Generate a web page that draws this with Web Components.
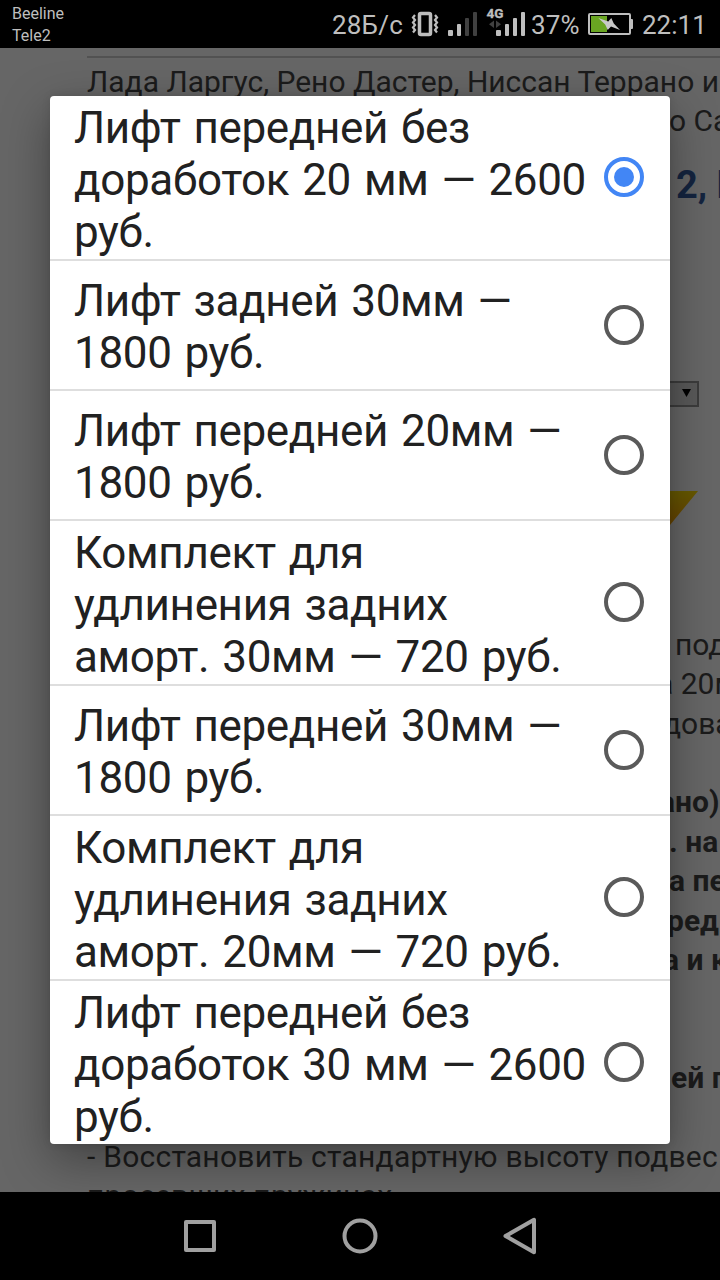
<!DOCTYPE html>
<html lang="ru">
<head>
<meta charset="utf-8">
<title>Лифт комплекты</title>
<style>
  body {
    margin: 0;
    background: #000;
    font-family: Roboto, "Noto Sans", sans-serif;
  }
</style>
</head>
<body>
<phone-screen>
  <status-bar slot="status"></status-bar>
  <shop-page slot="page"></shop-page>
  <select-dialog slot="dialog">
    <select-option checked>Лифт передней без доработок 20 мм — 2600 руб.</select-option>
    <select-option>Лифт задней 30мм — 1800 руб.</select-option>
    <select-option>Лифт передней 20мм — 1800 руб.</select-option>
    <select-option>Комплект для удлинения задних аморт. 30мм — 720 руб.</select-option>
    <select-option>Лифт передней 30мм — 1800 руб.</select-option>
    <select-option>Комплект для удлинения задних аморт. 20мм — 720 руб.</select-option>
    <select-option>Лифт передней без доработок 30 мм — 2600 руб.</select-option>
  </select-dialog>
  <nav-bar slot="nav"></nav-bar>
</phone-screen>

<script>
class BaseElement extends HTMLElement {
  constructor() {
    super()
    this.attachShadow({ mode: 'open' })
  }

  connectedCallback() {
    this.shadowRoot.innerHTML = this.render()
  }
}

class PhoneScreen extends BaseElement {
  render() {
    return `
      <style>
        :host {
          display: grid;
          grid-template-rows: 48px 1144px 88px;
          width: 720px;
          height: 1280px;
          overflow: hidden;
        }
        main {
          position: relative;
          overflow: hidden;
          background: #666;
        }
        /* modal lies over the page */
        .modal {
          position: absolute;
          inset: 0;
          display: grid;
          place-items: center;
        }
      </style>
      <slot name="status"></slot>
      <main>
        <slot name="page"></slot>
        <div class="modal"><slot name="dialog"></slot></div>
      </main>
      <slot name="nav"></slot>
    `
  }
}

class StatusBar extends BaseElement {
  render() {
    return `
      <style>
        :host {
          display: flex;
          justify-content: space-between;
          background: #000;
          color: #bebebe;
          padding: 0 14px 0 12px;
          box-sizing: border-box;
          height: 48px;
          overflow: hidden;
        }
        .carriers {
          font-size: 16px;
          line-height: 22px;
          padding-top: 3px;
        }
        .right {
          display: flex;
          font-size: 26px;
          line-height: 48px;
          padding-top: 1px;
          white-space: nowrap;
        }
        svg { display: block; margin-top: -1px; flex: none; }
        .speed { width: 79px; letter-spacing: .2px; }
        .level { width: 53px; letter-spacing: .2px; }
        .clock { width: 64px; }
      </style>
      <div class="carriers">
        <div>Beeline</div>
        <div>Tele2</div>
      </div>
      <div class="right">
        <span class="speed">28Б/с</span>
        <svg width="120" height="48" viewBox="411 0 120 48">
          <rect x="419.5" y="13.5" width="11" height="21" rx="1.5" fill="none" stroke="#bebebe" stroke-width="3.500"/>
          <path d="M415 15l-2 2.500 2 2.500-2 2.500 2 2.500-2 2.500 2 2.500-2 2.500M435 15l2 2.500-2 2.500 2 2.500-2 2.500 2 2.500-2 2.500 2 2.500" fill="none" stroke="#bebebe" stroke-width="2.200"/>
          <g fill="#bebebe">
            <rect x="448" y="30" width="5" height="6" rx="1"/>
            <rect x="457" y="24" width="4" height="12" rx="1"/>
          </g>
          <g fill="#404040">
            <rect x="465" y="18" width="4" height="18" rx="1"/>
            <rect x="473" y="12" width="4" height="24" rx="1"/>
            <path d="M494 20.500v7.500l-5-3.750zM496 20.500v7.500l5-3.750z"/>
          </g>
          <text x="486.500" y="18" font-size="13.500" font-weight="700" fill="#bebebe" stroke="#bebebe" stroke-width=".3">4G</text>
          <g fill="#bebebe">
            <rect x="496" y="30" width="5" height="6" rx="1"/>
            <rect x="505" y="24" width="4" height="12" rx="1"/>
            <rect x="513" y="18" width="4" height="18" rx="1"/>
            <rect x="521" y="12" width="4" height="24" rx="1"/>
          </g>
        </svg>
        <span class="level">37%</span>
        <svg width="58" height="48" viewBox="584 0 58 48">
          <rect x="589" y="14" width="41" height="20" rx="1" fill="none" stroke="#bebebe" stroke-width="2"/>
          <rect x="630" y="19" width="3" height="10" rx="1" fill="#bebebe"/>
          <rect x="591" y="16" width="16" height="16" fill="#69a522"/>
          <path d="M598.300 18l10 3.500 3-3.500 2.500 5.500 6.200 6.500-9-3.500-3.300 3.500-2.500-5.500z" fill="#c8c8c8"/>
        </svg>
        <span class="clock">22:11</span>
      </div>
    `
  }
}

class ShopPage extends BaseElement {
  render() {
    // fragments showing to the right of the dialog: [offset, text, bold]
    const lines = [
      [675, 'под'],
      [657, 'а 20м'],
      [663, 'дова'],
      [0, ''],
      [659, 'ано)', 1],
      [669, '. на', 1],
      [669, 'а пе', 1],
      [667, 'ред', 1],
      [663, 'а и к', 1],
      [0, ''],
      [0, ''],
      [654, 'ней п', 1],
      [0, '']
    ]

    return `
      <style>
        :host {
          display: flex;
          flex-direction: column;
          height: 1144px;
          overflow: hidden;
          white-space: nowrap;
          color: #1b1b1b;
          font-size: 30px;
          line-height: 39.4px;
        }
        p { margin: 0; height: 39.4px; flex: none; }
        b { font-weight: 700; }
        hr {
          margin: 8px 0 3.5px 87px;
          border: 0;
          height: 2px;
          background: #525252;
          flex: none;
        }
        h2 {
          margin: 20px 0 0 676px;
          font-size: 38px;
          line-height: 50px;
          color: #14243f;
          flex: none;
        }
        .full { padding-left: 87px; }
        .wide { letter-spacing: .24px; }
        .combo {
          box-sizing: border-box;
          width: 59px;
          height: 26px;
          margin: 170.5px 0 0 640px;
          border: 2px solid #3c3c3c;
          background: #595959;
          display: flex;
          align-items: center;
          justify-content: flex-end;
          padding-right: 6px;
          flex: none;
        }
        .combo svg { margin-top: -2px; }
        .arrow { display: block; margin: 84px 0 100px 630px; flex: none; }
      </style>
      <hr>
      <p class="full">Лада Ларгус, Рено Дастер, Ниссан Террано и</p>
      <p style="padding-left: 669px">о Са</p>
      <h2>2, Р</h2>
      <div class="combo">
        <svg width="9" height="8"><path d="M0 0h9l-4.500 8z" fill="#000"/></svg>
      </div>
      <svg class="arrow" width="68" height="34">
        <defs>
          <linearGradient id="gold" x1="0" y1="0" x2="0" y2="1">
            <stop offset="0" stop-color="#665900"/>
            <stop offset="1" stop-color="#664200"/>
          </linearGradient>
        </defs>
        <path d="M0 0h68l-28 34h-40z" fill="url(#gold)"/>
      </svg>
      ${lines.map(([x, text, bold]) => `<p style="padding-left: ${x}px">${bold ? `<b>${text}</b>` : text}</p>`).join('')}
      <p class="full wide">- Восстановить стандартную высоту подвес</p>
      <p class="full wide">просевших пружинах.</p>
    `
  }
}

class SelectDialog extends BaseElement {
  render() {
    return `
      <style>
        :host {
          display: block;
          width: 620px;
          background: #fff;
          border-radius: 4px;
          overflow: hidden;
          box-shadow: 0 16px 48px rgba(0, 0, 0, .36), 0 0 8px rgba(0, 0, 0, .1);
        }
        ::slotted(select-option:not(:last-child)) {
          border-bottom: 2px solid #dedede;
        }
      </style>
      <slot></slot>
    `
  }
}

class SelectOption extends BaseElement {
  render() {
    const checked = this.hasAttribute('checked')
    const color = checked ? '#4286f5' : '#5a5a5a'
    return `
      <style>
        :host {
          display: flex;
          align-items: center;
          min-height: 128px;
          padding: 0 26px 0 24px;
          color: #212121;
        }
        .label {
          flex: 1;
          padding: 5.6px 0 1.4px;
          font-size: 44px;
          line-height: 52px;
          letter-spacing: -.35px;
          word-spacing: 2.4px;
          margin-right: 12px;
        }
        svg { display: block; flex: none; margin-bottom: .6px; }
      </style>
      <div class="label"><slot></slot></div>
      <svg width="40" height="40" viewBox="0 0 40 40">
        <circle cx="20" cy="20" r="18" fill="none" stroke="${color}" stroke-width="4"/>
        ${checked ? `<circle cx="20" cy="20" r="10" fill="${color}"/>` : ''}
      </svg>
    `
  }
}

class NavBar extends BaseElement {
  render() {
    return `
      <style>
        :host {
          display: flex;
          align-items: center;
          justify-content: center;
          gap: 120px;
          height: 88px;
          background: #000;
        }
        svg { fill: none; stroke: #a0a0a0; stroke-width: 4; stroke-linejoin: round; }
      </style>
      <svg width="40" height="40"><rect x="6" y="6" width="28" height="28"/></svg>
      <svg width="40" height="40"><circle cx="20" cy="20" r="15.500"/></svg>
      <svg width="40" height="40"><path d="M34 3.800v32.400L5.500 20z"/></svg>
    `
  }
}

customElements.define('phone-screen', PhoneScreen)
customElements.define('status-bar', StatusBar)
customElements.define('shop-page', ShopPage)
customElements.define('select-dialog', SelectDialog)
customElements.define('select-option', SelectOption)
customElements.define('nav-bar', NavBar)
</script>
</body>
</html>
